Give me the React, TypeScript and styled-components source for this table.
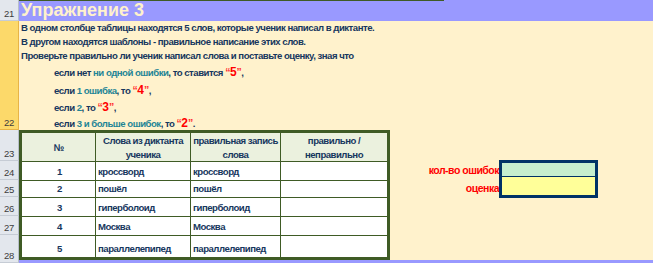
import React from "react";
import styled, { createGlobalStyle, css } from "styled-components";

const GlobalStyle = createGlobalStyle`
  html, body {
    margin: 0;
    padding: 0;
    background: #fff2cc;
  }
  body {
    font-family: "Liberation Sans", Arial, sans-serif;
  }
`;

// narrow bold text, close to Calibri at this zoom
const cellText = css`
  font-family: "Liberation Sans", Arial, sans-serif;
  font-weight: bold;
  font-size: 9.6px;
  letter-spacing: -0.5px;
  white-space: nowrap;
`;

const Page = styled.div`
  display: flex;
  width: 653px;
  height: 263px;
  overflow: hidden;
  background: #fff2cc;
`;

const HeaderColumn = styled.div`
  display: flex;
  flex-direction: column;
  width: 19px;
  flex: none;
`;

const RowHead = styled.div<{ $h: number; $sel?: boolean }>`
  box-sizing: border-box;
  height: ${(p) => p.$h}px;
  display: flex;
  align-items: flex-end;
  justify-content: center;
  padding-bottom: 1px;
  font-size: 9.5px;
  letter-spacing: -0.3px;
  color: #3c3c3c;
  background: ${(p) => (p.$sel ? "#fcd96a" : "#e3e7ed")};
  border-right: 1px solid ${(p) => (p.$sel ? "#e8b446" : "#b7bfca")};
  border-bottom: 1px solid ${(p) => (p.$sel ? "#e8b446" : "#c6ccd5")};
`;

const Sheet = styled.div`
  flex: 1;
  display: flex;
  flex-direction: column;
`;

const TitleBar = styled.div`
  height: 21px;
  display: flex;
  background: #9999ff;
`;

const TitleCell = styled.div`
  box-sizing: border-box;
  width: 425px;
  border-top: 1px solid #3f5b25;
  padding-left: 2px;
  font-weight: bold;
  font-size: 18px;
  line-height: 19px;
  color: #fff2cc;
`;

const Instructions = styled.div`
  display: flex;
  flex-direction: column;
  height: 109px;
`;

const Line = styled.div<{ $h: number; $indent?: boolean }>`
  ${cellText};
  height: ${(p) => p.$h}px;
  line-height: ${(p) => p.$h}px;
  padding-left: ${(p) => (p.$indent ? 35 : 2)}px;
  color: #17375e;
`;

const Teal = styled.span`
  color: #1f8596;
`;

const Mark = styled.span`
  color: #ff3333;
  font-size: 10.5px;
`;

const Grade = styled.span`
  color: #ff0000;
  font-size: 12px;
  font-weight: 900;
  letter-spacing: 0;
`;

const Lower = styled.div`
  display: flex;
  height: 130px;
`;

const Table = styled.div`
  display: grid;
  grid-template-columns: 73px 94px 89px 106px;
  grid-template-rows: 28px 18px 16px 18px 18px 21px;
  gap: 1px;
  background: #3f5b25;
  border: 3px solid #3f5b25;
  height: 124px;
  flex: none;
`;

const HeadCell = styled.div`
  ${cellText};
  background: #ebf1de;
  display: flex;
  align-items: center;
  justify-content: center;
  text-align: center;
  line-height: 14px;
  padding-top: 1px;
  color: #17375e;
`;

const Cell = styled.div<{ $center?: boolean }>`
  ${cellText};
  background: #ffffff;
  display: flex;
  align-items: flex-end;
  justify-content: ${(p) => (p.$center ? "center" : "flex-start")};
  padding: 0 0 2px 2px;
  line-height: 13px;
  color: #17375e;
  overflow: hidden;
`;

const ScoreArea = styled.div`
  display: flex;
  padding-top: 30px;
`;

const Labels = styled.div`
  width: 109px;
  display: flex;
  flex-direction: column;
  padding-top: 3px;
`;

const Label = styled.div<{ $h: number }>`
  ${cellText};
  font-size: 10.5px;
  height: ${(p) => p.$h}px;
  display: flex;
  align-items: center;
  justify-content: flex-end;
  color: #ff0000;
`;

const ScoreBox = styled.div`
  width: 93px;
  border: 3px solid #003366;
  display: flex;
  flex-direction: column;
  align-self: flex-start;
`;

const ScoreCell = styled.div<{ $h: number; $bg: string }>`
  height: ${(p) => p.$h}px;
  background: ${(p) => p.$bg};
`;

const Divider = styled.div`
  height: 1px;
  background: #003366;
`;

const BottomStrip = styled.div`
  height: 3px;
  background: #9999ff;
`;

const rows = [
  ["1", "кроссворд", "кроссворд"],
  ["2", "пошёл", "пошёл"],
  ["3", "гиперболоид", "гиперболоид"],
  ["4", "Москва", "Москва"],
  ["5", "параллелепипед", "параллелепипед"],
];

const heads: [number, string, boolean?][] = [
  [21, "21"],
  [109, "22", true],
  [31, "23"],
  [19, "24"],
  [17, "25"],
  [19, "26"],
  [19, "27"],
  [28, "28"],
];

export default function App() {
  return (
    <>
      <GlobalStyle />
      <Page>
        <HeaderColumn>
          {heads.map(([h, n, sel]) => (
            <RowHead key={n} $h={h} $sel={sel}>
              {n}
            </RowHead>
          ))}
        </HeaderColumn>
        <Sheet>
          <TitleBar>
            <TitleCell>Упражнение 3</TitleCell>
          </TitleBar>
          <Instructions>
            <Line $h={13}>
              В одном столбце таблицы находятся 5 слов, которые ученик написал в диктанте.
            </Line>
            <Line $h={15}>В другом находятся шаблоны - правильное написание этих слов.</Line>
            <Line $h={14}>
              Проверьте правильно ли ученик написал слова и поставьте оценку, зная что
            </Line>
            <Line $h={19} $indent>
              если нет <Teal>ни одной ошибки</Teal>, то ставится <Mark>“</Mark>
              <Grade>5</Grade>
              <Mark>”</Mark>,
            </Line>
            <Line $h={17} $indent>
              если <Teal>1 ошибка</Teal>, то <Mark>“</Mark>
              <Grade>4</Grade>
              <Mark>”</Mark>,
            </Line>
            <Line $h={17} $indent>
              если <Teal>2</Teal>, то <Mark>“</Mark>
              <Grade>3</Grade>
              <Mark>”</Mark>,
            </Line>
            <Line $h={14} $indent>
              если <Teal>3 и больше ошибок</Teal>, то <Mark>“</Mark>
              <Grade>2</Grade>
              <Mark>”</Mark>.
            </Line>
          </Instructions>
          <Lower>
            <Table>
              <HeadCell>№</HeadCell>
              <HeadCell>
                Слова из диктанта
                <br />
                ученика
              </HeadCell>
              <HeadCell>
                правильная запись
                <br />
                слова
              </HeadCell>
              <HeadCell>
                правильно /
                <br />
                неправильно
              </HeadCell>
              {rows.map(([n, w, c]) => (
                <React.Fragment key={n}>
                  <Cell $center>{n}</Cell>
                  <Cell>{w}</Cell>
                  <Cell>{c}</Cell>
                  <Cell />
                </React.Fragment>
              ))}
            </Table>
            <ScoreArea>
              <Labels>
                <Label $h={14}>кол-во ошибок</Label>
                <Label $h={22}>оценка</Label>
              </Labels>
              <ScoreBox>
                <ScoreCell $h={13} $bg="#c6efce" />
                <Divider />
                <ScoreCell $h={18} $bg="#ffff99" />
              </ScoreBox>
            </ScoreArea>
          </Lower>
          <BottomStrip />
        </Sheet>
      </Page>
    </>
  );
}
